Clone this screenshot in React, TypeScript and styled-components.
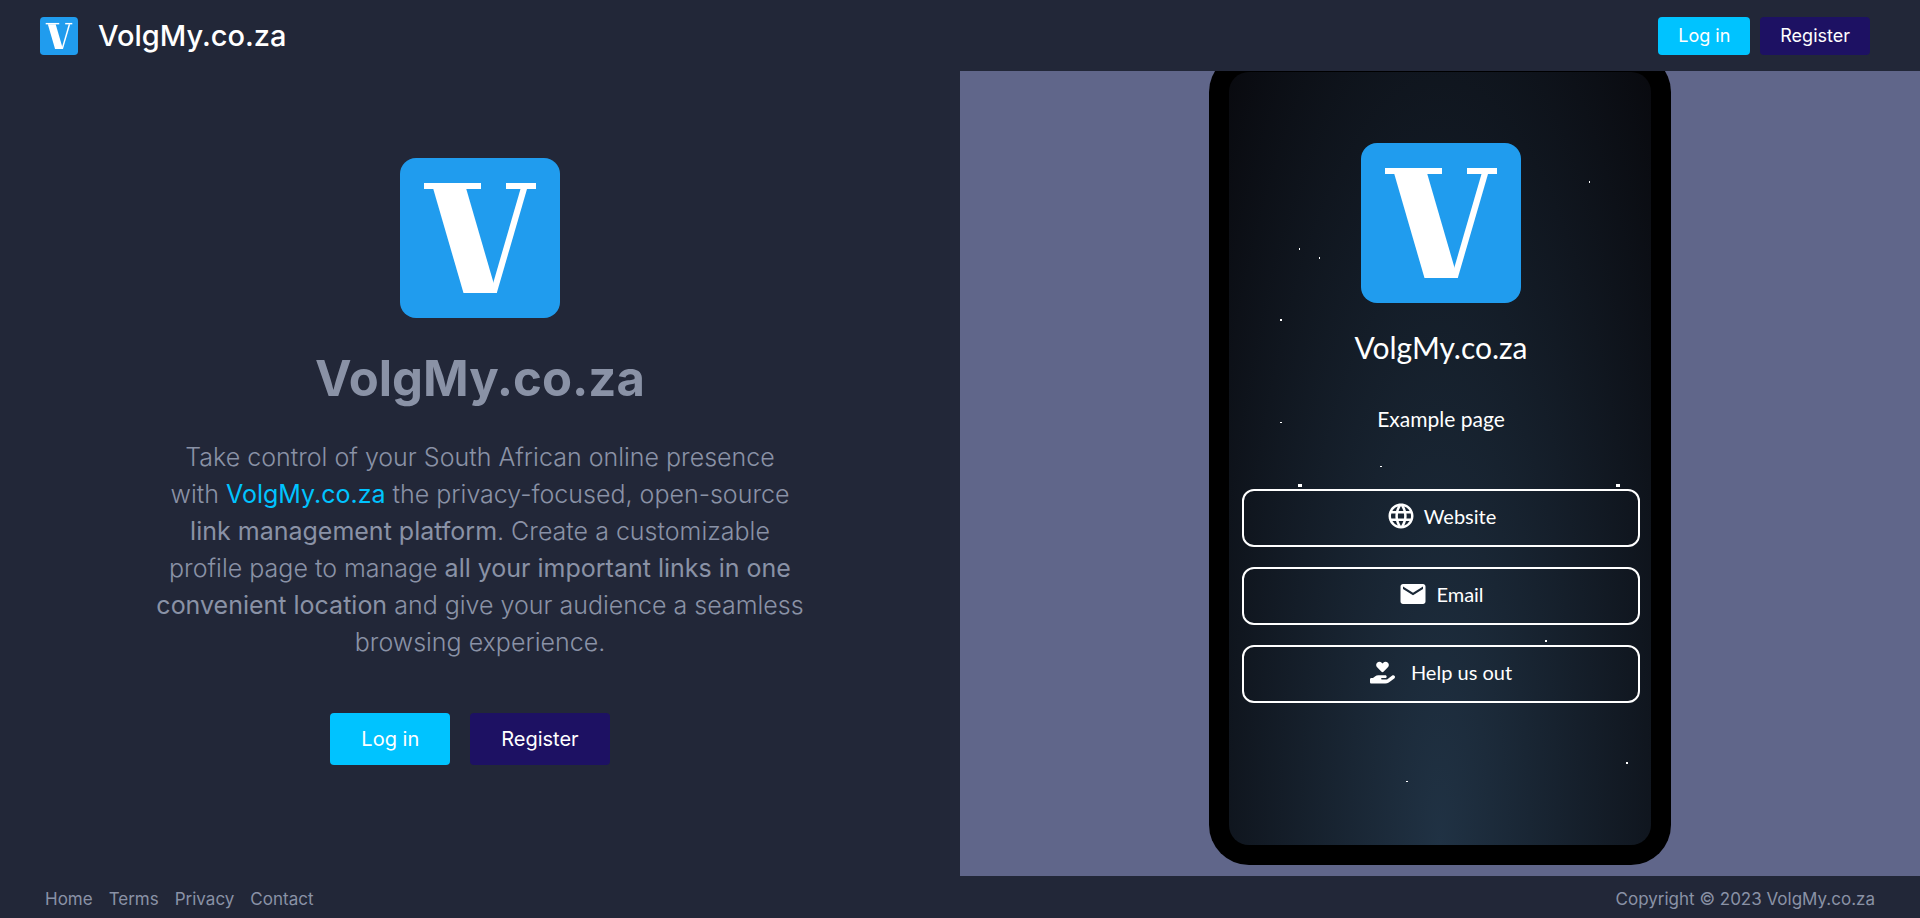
import React from "react";
import styled, { createGlobalStyle } from "styled-components";
import { MdEmail, MdLanguage } from "react-icons/md";
import { FaHandHoldingHeart } from "react-icons/fa6";

const GlobalStyle = createGlobalStyle`
  *, *::before, *::after { box-sizing: border-box; }
  body {
    margin: 0;
    background: #222738;
    color: #8a92a6;
    font-family: Inter, "Liberation Sans", sans-serif;
    font-size: 17px;
  }
  a { color: inherit; text-decoration: none; }
`;

const Page = styled.div`
  min-height: 100vh;
  display: flex;
  flex-direction: column;
`;

const Header = styled.header`
  display: flex;
  align-items: center;
  justify-content: space-between;
  height: 71px;
  padding: 0 50px 0 40px;
  position: relative;
  z-index: 1;
  background: #222738;
`;

const Brand = styled.a`
  && { color: #fff; }
  display: flex;
  align-items: center;
  gap: 20px;
  font-size: 29px;
  line-height: 36px;
  font-weight: 500;
`;

const Actions = styled.div<{ $large?: boolean }>`
  display: flex;
  gap: ${(p) => (p.$large ? "20px" : "10px")};
  padding-right: ${(p) => (p.$large ? "20px" : "0")};
`;

const Button = styled.button<{ $tone: "info" | "primary"; $large?: boolean }>`
  border: 0;
  border-radius: 4px;
  color: #fff;
  background: ${(p) => (p.$tone === "info" ? "#00c3ff" : "#1d1163")};
  font-family: inherit;
  font-size: ${(p) => (p.$large ? "20px" : "18px")};
  line-height: ${(p) => (p.$large ? "28px" : "26px")};
  padding: ${(p) => (p.$large ? "12px 31px" : "6px 20px")};
  cursor: pointer;
`;

const Main = styled.main`
  flex: 1;
  display: grid;
  grid-template-columns: 1fr 1fr;
`;

const Intro = styled.section`
  display: flex;
  flex-direction: column;
  align-items: center;
  justify-content: center;
  padding: 0 40px 25px;
  text-align: center;
`;

const Title = styled.h1`
  margin: 31px 0 30px;
  font-size: 49px;
  line-height: 60px;
  font-weight: 700;
`;

const Lead = styled.p`
  margin: 0 0 52px;
  max-width: 652px;
  font-size: 25px;
  line-height: 37px;
  font-weight: 300;

  b { font-weight: 400; }
  a { color: #00c3ff; font-weight: 400; }
`;

const KeepTogether = styled.span`
  white-space: nowrap;
`;

const Preview = styled.section`
  display: flex;
  justify-content: center;
  align-items: flex-end;
  padding-bottom: 11px;
  background: #60668a;
`;

const Phone = styled.div`
  width: 462px;
  height: 813px;
  margin-top: -19px;
  padding: 20px;
  border-radius: 40px;
  background: #000;
`;

const Screen = styled.div`
  position: relative;
  height: 100%;
  padding: 71px 11px 0 13px;
  border-radius: 20px;
  overflow: hidden;
  background: radial-gradient(ellipse at bottom, #203244 0%, #090a0f 100%);
  color: #fff;
  font-family: Lato, sans-serif;
  display: flex;
  flex-direction: column;
  align-items: center;
`;

const Sky = styled.svg`
  position: absolute;
  inset: 0;
  width: 100%;
  height: 100%;
`;

const ProfileName = styled.h2`
  margin: 26px 0 38px;
  font-size: 30px;
  line-height: 36px;
  font-weight: 400;
`;

const Bio = styled.p`
  margin: 0 0 54px;
  font-size: 21px;
  line-height: 32px;
`;

const Links = styled.nav`
  align-self: stretch;
  display: flex;
  flex-direction: column;
  gap: 20px;
`;

const LinkButton = styled.a<{ $gap: number }>`
  display: flex;
  align-items: center;
  justify-content: center;
  gap: ${(p) => p.$gap}px;
  height: 58px;
  padding-bottom: 4px;
  border: 2px solid #fff;
  border-radius: 12px;
  font-size: 20px;
  line-height: 28px;
  position: relative;
`;

const Footer = styled.footer`
  display: flex;
  align-items: center;
  justify-content: space-between;
  height: 42px;
  padding: 4px 45px 0;
  line-height: 24px;
`;

const FooterNav = styled.nav`
  display: flex;
  gap: 16px;
`;

/* Rounded tile holding the brand mark: two serifs, a heavy stroke and a hairline. */
const Logo = ({ size }: { size: number }) => (
  <svg width={size} height={size} viewBox="0 0 160 160" role="img" aria-label="VolgMy logo">
    <rect width="160" height="160" rx="16" fill="#209cee" />
    <g fill="#fff">
      <rect x="24" y="25" width="57" height="6" />
      <rect x="106" y="25" width="30" height="6" />
      <rect width="33" height="105" transform="translate(33 30) skewX(16.2)" />
      <rect width="6.5" height="105" transform="translate(120.8 30) skewX(-16.2)" />
    </g>
  </svg>
);

const stars = [
  [360, 109, 1, 2], [70, 176, 1, 2], [90, 185, 1, 2], [51, 247, 2, 2],
  [51, 350, 2, 1], [151, 394, 2, 1], [69, 412, 4, 3], [387, 412, 4, 3],
  [316, 568, 2, 2], [397, 690, 2, 2], [177, 709, 2, 1],
];

export default function App() {
  return (
    <>
      <GlobalStyle />
      <Page>
        <Header>
          <Brand href="#">
            <Logo size={38} />
            <span>VolgMy.co.za</span>
          </Brand>
          <Actions>
            <Button $tone="info">Log in</Button>
            <Button $tone="primary">Register</Button>
          </Actions>
        </Header>

        <Main>
          <Intro>
            <Logo size={160} />
            <Title>VolgMy.co.za</Title>
            <Lead>
              Take control of your South African online presence{" "}
              <KeepTogether>
                with <a href="#">VolgMy.co.za</a>
              </KeepTogether>{" "}
              the privacy-focused, open-source <b>link management platform</b>. Create
              a customizable profile page to manage{" "}
              <b>all your important links in one convenient location</b> and give your
              audience a seamless browsing experience.
            </Lead>
            <Actions $large>
              <Button $tone="info" $large>Log in</Button>
              <Button $tone="primary" $large>Register</Button>
            </Actions>
          </Intro>

          <Preview>
            <Phone>
              <Screen>
                <Sky aria-hidden="true" fill="#fff">
                  {stars.map(([x, y, w, h]) => (
                    <rect key={`${x}-${y}`} x={x} y={y} width={w} height={h} />
                  ))}
                </Sky>
                <Logo size={160} />
                <ProfileName>VolgMy.co.za</ProfileName>
                <Bio>Example page</Bio>
                <Links>
                  <LinkButton href="#" $gap={8}>
                    <MdLanguage size={30} />
                    Website
                  </LinkButton>
                  <LinkButton href="#" $gap={8}>
                    <MdEmail size={30} />
                    Email
                  </LinkButton>
                  <LinkButton href="#" $gap={16}>
                    <FaHandHoldingHeart size={25} />
                    Help us out
                  </LinkButton>
                </Links>
              </Screen>
            </Phone>
          </Preview>
        </Main>

        <Footer>
          <FooterNav>
            <a href="#">Home</a>
            <a href="#">Terms</a>
            <a href="#">Privacy</a>
            <a href="#">Contact</a>
          </FooterNav>
          <span>Copyright © 2023 VolgMy.co.za</span>
        </Footer>
      </Page>
    </>
  );
}
